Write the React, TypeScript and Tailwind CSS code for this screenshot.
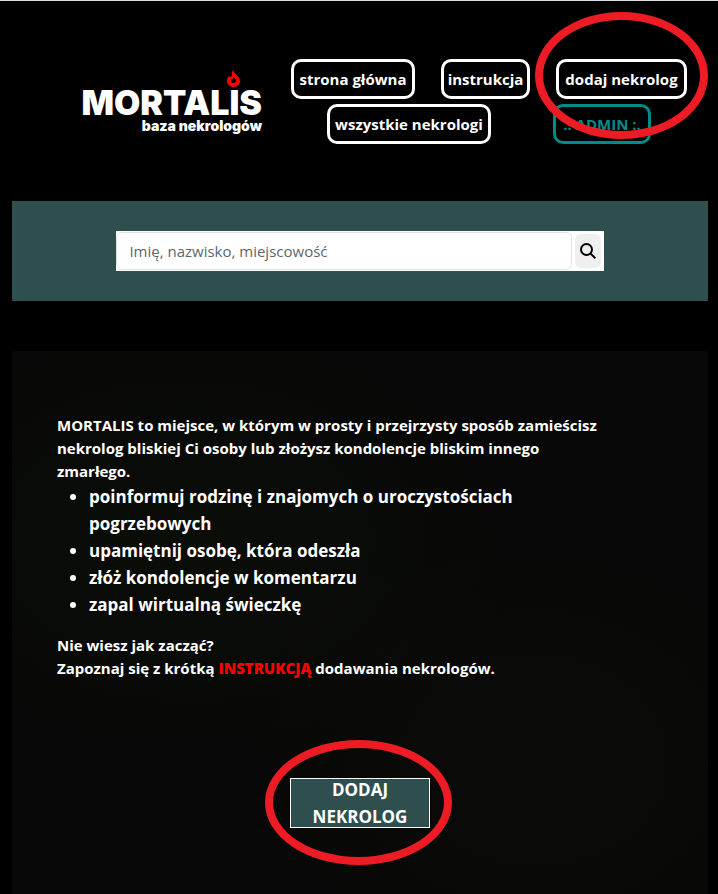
import React from "react";

type NavItem = { label: string; width: string; admin?: boolean; marked?: boolean };

const navItems: NavItem[] = [
  { label: "strona główna", width: "w-[124px]" },
  { label: "instrukcja", width: "w-[89px]" },
  { label: "dodaj nekrolog", width: "w-[131px]", marked: true },
  { label: "wszystkie nekrologi", width: "w-[164px]" },
  { label: ".: ADMIN :.", width: "w-[98px]", admin: true },
];

const benefits = [
  "poinformuj rodzinę i znajomych o uroczystościach pogrzebowych",
  "upamiętnij osobę, która odeszła",
  "złóż kondolencje w komentarzu",
  "zapal wirtualną świeczkę",
];

function Flame() {
  return (
    <svg viewBox="0 0 13 17" className="absolute right-[22px] -top-[17px] h-[17px] w-[13px]" aria-hidden="true">
      <path
        fill="#ff0000"
        fillRule="evenodd"
        d="M6.3 0C6.7 2.6 8.4 3.8 10 5.6C11.800 7.500 13 9 13 11.100C13 14.500 10.200 17 6.500 17C2.800 17 0 14.500 0 11.100C0 8.900 1 7 2.300 5.800L3.300 7.700C4.500 6.500 5 5.600 4.900 4.300C4.800 2.700 5 1.200 6.300 0ZM6.600 6.700C6.600 8.200 5.700 8.500 4.700 9.300C3.900 9.900 3.700 10.700 4 11.500C4.400 12.600 5.400 13.100 6.500 13C8 12.900 9 11.900 8.900 10.500C8.800 9.300 7.500 8.700 6.600 6.700Z"
      />
    </svg>
  );
}

function Header() {
  return (
    <header className="flex h-[200px] items-start pt-[58px]">
      <a href="#" className="relative ml-[66px] mt-[28px] block w-[184px] shrink-0 text-right font-['Inter','Liberation_Sans',sans-serif] font-black">
        <span className="relative block text-[34px] leading-[32px] whitespace-nowrap">
          MORTALIS
          <Flame />
        </span>
        <span className="block text-[14px] leading-[14px] whitespace-nowrap">baza nekrologów</span>
      </a>
      <nav className="-mr-[5px] ml-[3px] flex flex-1 flex-wrap justify-evenly gap-y-[5px]">
        {navItems.map((item) => (
          <a
            key={item.label}
            href="#"
            className={`relative flex h-10 items-center justify-center rounded-[10px] border-3 text-[15px] font-bold whitespace-nowrap ${item.width} ${
              item.admin ? "border-[#008b8b] text-[#008b8b]" : "border-white"
            }`}
          >
            {item.label}
            {item.marked && (
              <span className="pointer-events-none absolute -top-[50px] -left-6 z-10 h-[127px] w-[173px] rounded-[50%] border-8 border-[#ed1c24]" />
            )}
          </a>
        ))}
      </nav>
    </header>
  );
}

function Search() {
  return (
    <section className="flex h-[100px] items-center justify-center bg-[#2f4f4f]">
      <form className="flex h-10 w-[70%] items-center bg-white pr-[3px]" onSubmit={(e) => e.preventDefault()}>
        <input
          type="text"
          aria-label="Imię, nazwisko, miejscowość"
          placeholder="Imię, nazwisko, miejscowość"
          className="h-[38px] min-w-0 flex-1 rounded-md border border-[#dee2e6] px-3 text-[15px] text-[#212529] outline-none placeholder:text-[#60666b]"
        />
        <button type="submit" aria-label="Szukaj" className="ml-[3px] flex h-[34px] w-[26px] items-center justify-center rounded-md bg-[#efefef]">
          <svg viewBox="0 0 16 16" className="size-4" fill="none" stroke="#000" strokeWidth="2" aria-hidden="true">
            <circle cx="6.500" cy="6.500" r="5.500" />
            <path d="M10.400 10.400L15.300 15.300" />
          </svg>
        </button>
      </form>
    </section>
  );
}

function Intro() {
  return (
    <main className="mt-[50px] flex-1 bg-[#070807] bg-[radial-gradient(ellipse_at_25%_35%,#0b0d08,transparent_45%),radial-gradient(ellipse_at_75%_75%,#0b0c08,transparent_40%)] px-[45px] pt-[63px] pb-[66px] font-bold">
      <div className="max-w-[550px] text-[15px] leading-[23px]">
        <p>
          MORTALIS to miejsce, w którym w prosty i przejrzysty sposób zamieścisz nekrolog bliskiej Ci osoby lub złożysz kondolencje
          bliskim innego zmarłego.
        </p>
        <ul className="mb-4 max-w-[490px] list-disc pl-8 text-[17px] leading-[27px]">
          {benefits.map((text) => (
            <li key={text}>{text}</li>
          ))}
        </ul>
        <p>
          Nie wiesz jak zacząć?
          <br />
          Zapoznaj się z krótką{" "}
          <a href="#" className="font-extrabold text-[#ff0000]">
            INSTRUKCJĄ
          </a>{" "}
          dodawania nekrologów.
        </p>
      </div>
      <div className="mt-[98px] flex justify-center">
        <div className="relative">
          <button type="button" className="h-[50px] w-[140px] border border-white bg-[#2f4f4f] px-4 text-[17px] leading-[27px]">
            <span className="-my-1 block">DODAJ NEKROLOG</span>
          </button>
          <span className="pointer-events-none absolute -top-[38px] -left-[25px] h-[125px] w-[187px] rounded-[50%] border-8 border-[#ed1c24]" />
        </div>
      </div>
    </main>
  );
}

export default function App() {
  return (
    <div className="flex min-h-screen flex-col border-t border-[#dee2e6] bg-black pr-[10px] pl-3 font-['Open_Sans','Noto_Sans',sans-serif] text-white">
      <Header />
      <Search />
      <Intro />
    </div>
  );
}
